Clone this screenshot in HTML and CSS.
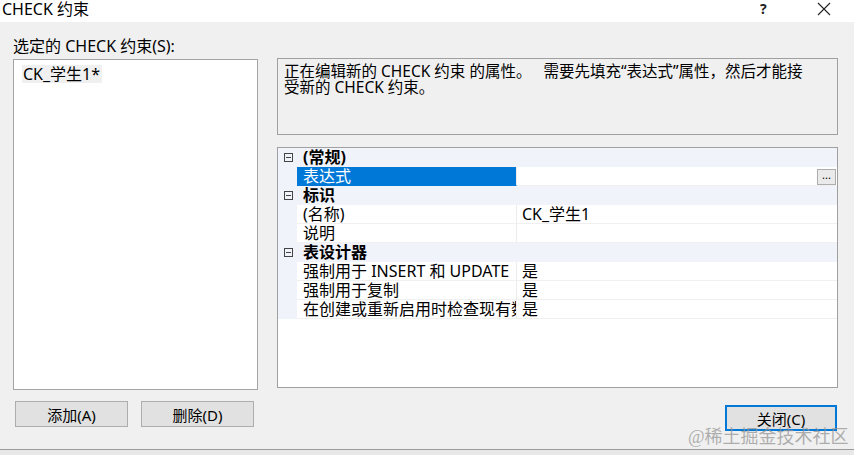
FILE: index.html
```html
<!DOCTYPE html>
<html lang="zh-CN">
<head>
  <meta charset="UTF-8">
  <meta name="viewport" content="width=device-width, initial-scale=1.0">
  <title>CHECK 约束</title>
  <link rel="stylesheet" href="styles.css">
</head>
<body>

<div id="window">
  <div class="titlebar">
    <span class="title">CHECK 约束</span>
    <span class="help">?</span>
    <span class="close-x">
      <svg width="14" height="14" viewBox="0 0 14 14"><path d="M1 1 L13 13 M13 1 L1 13" stroke="#222" stroke-width="1.1" fill="none"/></svg>
    </span>
  </div>

  <div class="dialog">
    <div class="left-col">
      <div class="label">选定的 CHECK 约束(S):</div>
      <div class="list">
        <span class="list-item">CK_学生1*</span>
      </div>
      <div class="button-row">
        <button class="btn">添加(A)</button>
        <button class="btn">删除(D)</button>
      </div>
    </div>

    <div class="right-col">
      <div class="desc">正在编辑新的 CHECK 约束 的属性。&nbsp;&nbsp; 需要先填充“表达式”属性，然后才能接受新的 CHECK 约束。</div>

      <div class="grid">
        <div class="row cat">
          <span class="gutter"><i class="toggle"></i></span>
          <span class="cat-name">(常规)</span>
        </div>
        <div class="row">
          <span class="gutter"></span>
          <span class="name selected">表达式</span>
          <span class="value"><span class="dots">...</span></span>
        </div>
        <div class="row cat">
          <span class="gutter"><i class="toggle"></i></span>
          <span class="cat-name">标识</span>
        </div>
        <div class="row">
          <span class="gutter"></span>
          <span class="name">(名称)</span>
          <span class="value">CK_学生1</span>
        </div>
        <div class="row">
          <span class="gutter"></span>
          <span class="name">说明</span>
          <span class="value"></span>
        </div>
        <div class="row cat">
          <span class="gutter"><i class="toggle"></i></span>
          <span class="cat-name">表设计器</span>
        </div>
        <div class="row">
          <span class="gutter"></span>
          <span class="name">强制用于 INSERT 和 UPDATE</span>
          <span class="value">是</span>
        </div>
        <div class="row">
          <span class="gutter"></span>
          <span class="name">强制用于复制</span>
          <span class="value">是</span>
        </div>
        <div class="row">
          <span class="gutter"></span>
          <span class="name">在创建或重新启用时检查现有数据</span>
          <span class="value">是</span>
        </div>
      </div>

      <div class="close-row">
        <button class="btn btn-default">关闭(C)</button>
      </div>
    </div>

    <div class="watermark">@稀土掘金技术社区</div>
  </div>

  <div class="bottom-strip"></div>
</div>

</body>
</html>
```

FILE: styles.css
```css
body {
  margin: 0;
  padding: 0;
  font-family: "Noto Sans", "Noto Sans CJK SC", sans-serif;
  font-size: 16px;
  color: #000;
  background: #e6e6e6;
}

#window {
  width: 854px;
  height: 455px;
  overflow: hidden;
}

.titlebar {
  height: 22px;
  background: #fff;
  display: flex;
  align-items: flex-start;
  position: relative;
}

.title {
  font-size: 16px;
  line-height: 19px;
  margin-left: 2px;
}

.help {
  position: absolute;
  left: 760px;
  top: 0;
  font-size: 14px;
  font-weight: bold;
  line-height: 18px;
  color: #222;
}

.close-x {
  position: absolute;
  left: 817px;
  top: 2px;
  line-height: 0;
}

.dialog {
  height: 427px;
  background: #f0f0f0;
  display: flex;
  gap: 19px;
  padding-left: 13px;
  box-sizing: border-box;
  position: relative;
}

.left-col {
  width: 245px;
  padding-top: 14px;
}

.label {
  line-height: 20px;
  height: 20px;
}

.list {
  margin-top: 3px;
  height: 331px;
  background: #fff;
  border: 1px solid #a5a5a5;
  box-sizing: border-box;
  padding: 3px 0 0 8px;
}

.list-item {
  display: inline-block;
  background: #f0f0f0;
  line-height: 18px;
  padding: 0 2px 0 1px;
}

.button-row {
  margin-top: 11px;
  display: flex;
  gap: 13px;
  padding-left: 2px;
}

.btn {
  width: 113px;
  height: 26px;
  background: #e1e1e1;
  border: 1px solid #adadad;
  font-family: "Noto Sans", "Noto Sans CJK SC", sans-serif;
  font-size: 15px;
  color: #000;
  padding: 0;
}

.btn-default {
  width: 112px;
  border: 2px solid #0078d7;
}

.right-col {
  width: 561px;
  padding-top: 36px;
}

.desc {
  height: 77px;
  border: 1px solid #a0a0a0;
  box-sizing: border-box;
  padding: 4px 24px 4px 6px;
  line-height: 16px;
  font-size: 15.5px;
}

.grid {
  margin-top: 12px;
  height: 241px;
  background: #fff;
  border: 1px solid #a0a0a0;
  box-sizing: border-box;
}

.row {
  display: flex;
  height: 19px;
  line-height: 19px;
  white-space: nowrap;
}

.gutter {
  width: 19px;
  flex: none;
  background: #f0f3f9;
  display: flex;
  align-items: center;
  justify-content: center;
}

.toggle {
  width: 7px;
  height: 7px;
  border: 1px solid #444;
  position: relative;
  margin-left: 1px;
}

.toggle::after {
  content: "";
  position: absolute;
  left: 1px;
  right: 1px;
  top: 3px;
  height: 1px;
  background: #444;
}

.cat {
  background: #f0f3f9;
}

.cat-name {
  font-weight: bold;
  padding-left: 6px;
}

.name {
  width: 220px;
  flex: none;
  padding-left: 6px;
  box-sizing: border-box;
  overflow-x: clip;
  border-bottom: 1px solid #f0f0f0;
  border-right: 1px solid #ececec;
}

.name.selected {
  background: #0078d7;
  color: #fff;
  border-bottom-color: #0078d7;
}

.value {
  flex: 1;
  padding-left: 5px;
  border-bottom: 1px solid #f0f0f0;
  display: flex;
  justify-content: space-between;
}

.dots {
  margin-left: auto;
  margin-right: 1px;
  margin-top: 2px;
  width: 17px;
  height: 14px;
  line-height: 10px;
  font-size: 11px;
  text-align: center;
  background: #eaeaea;
  border: 1px solid #adadad;
}

.close-row {
  margin-top: 17px;
  display: flex;
  justify-content: flex-end;
  padding-right: 1px;
}

.watermark {
  position: absolute;
  left: 688px;
  top: 405px;
  font-family: "Liberation Serif", "Noto Sans CJK SC", serif;
  font-size: 18px;
  line-height: 20px;
  color: rgba(150, 150, 150, 0.75);
}

.bottom-strip {
  height: 6px;
  border-top: 1px solid #9a9a9a;
  background: #e8e8e8;
}
```
